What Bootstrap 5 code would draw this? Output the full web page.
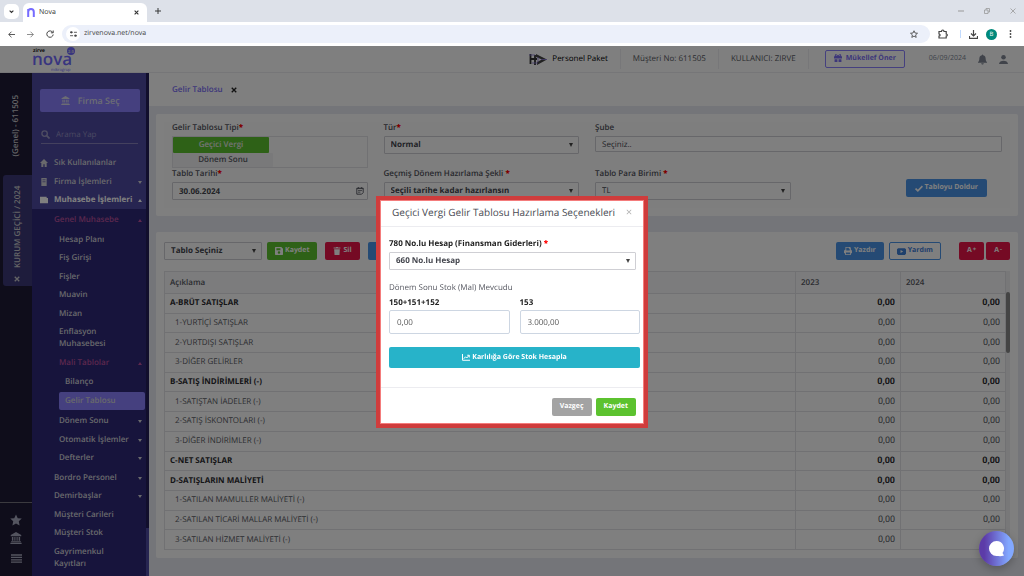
<!DOCTYPE html>
<html lang="tr">
<head>
<meta charset="utf-8">
<meta name="viewport" content="width=device-width, initial-scale=1">
<title>Nova</title>
<link href="https://cdn.jsdelivr.net/npm/bootstrap@5.3.0/dist/css/bootstrap.min.css" rel="stylesheet">
<style>
  :root { --ink:#575962; --accent:#8a80ff; --green:#5cc22f; --blue:#4a94e8; --crimson:#ea1449; }
  body { font-family:"Open Sans","Noto Sans",sans-serif; font-size:8px; line-height:12px; color:var(--ink); height:100vh; overflow:hidden; background:#e8eaf2; text-rendering:geometricPrecision; }
  svg { display:inline-block; vertical-align:middle; fill:currentColor; flex:none; }
  a { text-decoration:none; color:inherit; }
  button, input, select { font-family:inherit; text-rendering:inherit; }
  .ic { width:9px; height:9px; }

  /* browser window */
  .tabstrip { height:22px; flex:none; background:#dde1e9; color:#333; }
  .tabstrip button, .toolbar button { border:0; background:none; padding:0; color:inherit; display:flex; }
  .tabmenu { width:15px; height:15px; border-radius:5px !important; background:#fff !important; align-items:center; justify-content:center; }
  .browsertab { width:124px; height:19px; background:#fff; border-radius:6px 6px 0 0; font-size:7px; }
  .winbtns { color:#999; }
  .toolbar { height:24px; flex:none; background:#fff; color:#444; }
  .address { height:18px; background:#ecf0fa; border-radius:9px; }
  .address input { border:0; background:none; outline:0; font-size:7px; color:#444; padding:0; min-width:0; }
  .siteinfo { width:14px; height:14px; border-radius:50%; background:#fff; }
  .avatar { width:11px; height:11px; border-radius:50%; background:#00897b; color:#fff; font-size:6px; }

  /* application frame */
  .apphead { height:27px; flex:none; background:#fff; border-bottom:1px solid #ececf0; }
  .apphead .cell { height:20px; border-left:1px solid #efeff3; padding:0 12px; }
  .apphead .cell-wide { padding:0 16px; }
  .headtail { gap:12px; padding-right:16px; color:#808795; font-size:7px; }
  .logo { width:48px; height:27px; margin-left:30px; }
  .btn-suggest { border:1px solid var(--accent); border-radius:2px; color:#7a6ef5; font-weight:700; font-size:7px; line-height:12px; padding:2px 8px; background:none; height:18px; }
  .rail { width:32px; flex:none; background:#1e1a36; color:#c8c8cc; }
  .vtab { writing-mode:vertical-rl; transform:rotate(180deg); font-size:8px; line-height:12px; font-weight:600; }
  .vtab-plain { margin:22px 0 10px; }
  .vtab-active { background:#3c3878; width:29px; height:111px; border-radius:0 3px 3px 0; }
  .railfoot { border-top:1px solid #77757f; color:#a9abc0; height:74px; padding-top:11px; gap:6px; }
  .sidenav { width:117px; flex:none; background:#4e4aa2; color:#d2d2d8; font-size:8px; line-height:12px; font-weight:600; }
  .sidescroll { width:4px; background:#221c58; }
  .sidescroll i { display:block; height:48px; background:#4e4aa2; }
  .btn-firm { height:23px; margin:16px 6px 0 8px; background:var(--accent); color:#d8d8e8; border:0; border-radius:2px; font-size:9px; line-height:12px; font-weight:600; padding:0; }
  .find { margin:14px 8px 0 9px; height:18px; gap:6px; border-bottom:1px solid #8883bd; color:#9c9ac4; }
  .find input { background:none; border:0; outline:0; padding:0; min-width:0; font-size:8px; color:#ccc; }
  .find input::placeholder { color:#9692c4; opacity:1; }
  .menu { list-style:none; margin:0; padding:0; }
  .menu a { display:flex; align-items:center; padding:3px 4px 3px 22px; white-space:nowrap; }
  .menu .even > a, .deep > li:nth-child(even) > a, .deeper > li:first-child > a { padding-bottom:4px; }
  .menu .deep { padding:1px 0; }
  .menu .deep a { padding-left:27px; }
  .menu .deeper { padding:1px 0 2px; }
  .menu .deep .deeper a { padding-left:33px; }
  .roots { margin-top:10px; }
  .menu.roots a { padding-left:8px; gap:6px; }
  .menu .picked { background:var(--accent); margin:0 1px 0 27px; padding-left:6px !important; border-radius:2px; }
  .menu a[data-fold]::after { content:""; margin-left:auto; border:2px solid transparent; border-top:3px solid currentColor; border-bottom:0; }
  .menu a[data-fold="open"]::after { border-top:0; border-bottom:3px solid currentColor; }
  .submenu { background:#2e2878; flex:1; padding-top:2px; }
  .hot { color:#b8509c; }

  /* page */
  .pagetabs { height:33px; background:#fff; font-weight:600; color:#7a6ef5; padding-left:23px; }
  .panel { background:#fff; border-radius:2px; margin:0 6px 0 7px; }
  .panel-grid { margin-top:16px; padding:10px 8px 8px; }
  .formarea { background:#fcfcfd; padding:0 0 8px; }
  .formarea .row { --bs-gutter-x:16px; margin:0; }
  .lbl { display:block; font-weight:600; line-height:12px; margin-bottom:2px; color:#50525a; }
  .lbl b { color:#f00; }
  .field { display:block; width:100%; height:18px; border:1px solid #cfcfd4; border-radius:1px; background-color:#fff; padding:0 6px; font-size:8px; line-height:12px; font-weight:700; color:#44464e; }
  .field-low { height:16px; }
  .field-table { width:98px; }
  select.field { appearance:none; background-image:url("data:image/svg+xml,%3Csvg xmlns='http://www.w3.org/2000/svg' viewBox='0 0 4 4'%3E%3Cpath d='M0 0h4L2 4z' fill='%23444'/%3E%3C/svg%3E"); background-repeat:no-repeat; background-size:4px 4px; background-position:right 5px center; }
  .toggle { border:1px solid #e2e2e6; height:32px; }
  .toggle label { display:block; text-align:center; height:16px; line-height:16px; width:96px; border-radius:1px; font-weight:600; }
  .toggle .off { background:#f2f2f4; width:100px; height:14px; line-height:14px; }
  .toggle .on { background:var(--green); color:#e8e8e8; }
  .tool { display:inline-flex; align-items:center; justify-content:center; gap:2px; height:18px; padding:0 7px; border:1px solid transparent; border-radius:2px; color:#fff; font-size:7px; line-height:12px; font-weight:700; white-space:nowrap; }
  .tool-green { background:var(--green); } .tool-red { background:var(--crimson); } .tool-blue { background:var(--blue); } .tool-gray { background:#a3a3a3; }
  .tool-line { border-color:var(--blue); color:#3f80d8; background:none; }
  .tool-fill { margin:0 15px 3px 0; padding:0 8px; }
  .tool sup { font-size:6px; top:-2px; margin-left:-1px; }
  .gridtools { gap:5px; margin-bottom:11px; }
  .zoomers { gap:2px; margin-left:13px; }
  .ledger { width:100%; height:279px; border-collapse:collapse; table-layout:fixed; font-size:8px; line-height:12px; }
  .ledger .num { width:105px; }
  .ledger th, .ledger td { border:1px solid #e2e2e6; padding:0 5px; font-weight:400; }
  .ledger thead th { background:#f8f8fa; font-weight:600; height:22px; }
  .ledger tbody th { padding-left:10px; }
  .ledger td { text-align:right; font-family:Roboto,sans-serif; font-size:9px; }
  .ledger .sum th, .ledger .sum td { font-weight:700; color:#2c2c30; }
  .ledger .sum th { padding-left:5px; }
  .gridscroll { width:4px; background:#f0f0f2; padding-top:21px; }
  .gridscroll i { display:block; height:61px; background:#888; border-radius:2px; }

  /* layers above the page */
  .veil { position:absolute; inset:0; background:rgba(0,0,0,.5); z-index:5; }
  .chat { position:fixed; right:10px; bottom:10px; width:35px; height:35px; border:0; border-radius:50%; padding:0; color:#fff; z-index:20; background:linear-gradient(90deg,#5c3ba8 15%,#82a8ff 85%); box-shadow:0 3px 8px rgba(0,0,0,.25); }
  .choices .modal-dialog { max-width:272px; margin:196px auto 0; }
  .choices .modal-content { border:4px solid #cf3c3c; border-radius:0; outline:1px solid #f47c7c; outline-offset:-5px; color:var(--ink); }
  .choices .modal-header { padding:3px 12px 5px; border-bottom:1px solid #ececf0; }
  .choices .modal-title { font-size:10px; line-height:18px; font-weight:400; color:#484a52; }
  .choices .modal-body { padding:11px 4px 19px 9px; }
  .choices .btn-close { width:6px; height:6px; padding:0; margin:0; background-size:6px; box-sizing:border-box; opacity:.3; }
  .choices .lbl { color:#222; font-weight:700; }
  .choices .row { --bs-gutter-x:10px; }
  .choices .row .lbl { margin-bottom:1px; }
  .stockhint { margin:12px 0 3px; }
  .amount { display:block; width:100%; height:24px; border:1px solid #cdd6e2; border-radius:2px; padding:0 7px; font-size:8px; color:#555; }
  .btn-calc { width:100%; height:21px; margin-top:13px; background:#27b3c9; }
  .choices .modal-footer { padding:10px 8px 8px; border-top:1px solid #ececf0; gap:4px; }
  .choices .modal-footer > * { margin:0; }
</style>
</head>
<body class="d-flex flex-column">

<svg width="0" height="0" class="position-absolute" aria-hidden="true">
  <symbol id="bank" viewBox="0 0 16 16"><path d="M8 0l7 4v1.500H1V4zM2.500 6.500h2v5h-2zM5.800 6.500h1.500v5H5.800zM8.700 6.500h1.500v5H8.700zM11.500 6.500h2v5h-2zM1.500 12.300h13v1.200h-13zM.5 14.300h15V16H.5z"/></symbol>
  <symbol id="cross" viewBox="0 0 8 8"><path d="M1 1l6 6M7 1L1 7" stroke="currentColor" stroke-width="1.800"/></symbol>
  <symbol id="save" viewBox="0 0 14 14"><path fill-rule="evenodd" d="M1 0h10l3 3v10l-1 1H1l-1-1V1zM2.500 2v3.500h7V2zM7 7.500a2.200 2.200 0 100 4.400 2.200 2.200 0 000-4.400z"/></symbol>
  <symbol id="trash" viewBox="0 0 14 14"><path d="M1 1h4l.6-1h2.800L9 1h4v1.800H1zM2 3.800h10L11.300 14H2.700z"/></symbol>
  <symbol id="print" viewBox="0 0 14 14"><path fill-rule="evenodd" d="M2.500 0h8l1.500 1.500V5h.5L14 6.500V11h-2v3H2v-3H0V6.500L1.500 5h1zM4 1.500V6h6V3H8.500V1.500zM3.500 9.500v3h7v-3z"/></symbol>
  <symbol id="play" viewBox="0 0 16 12"><path fill-rule="evenodd" d="M2 0h12l2 2v8l-2 2H2l-2-2V2zM6.300 3.300v5.400L11 6z"/></symbol>
  <symbol id="chart" viewBox="0 0 16 14"><path d="M1 0v12.500h15M3.500 9.500L7 5.500l2.500 2.500L14 3M10.500 2.500H14.500V7" fill="none" stroke="currentColor" stroke-width="2"/></symbol>
  <symbol id="check" viewBox="0 0 14 12"><path d="M1 6l4 4 8-8" fill="none" stroke="currentColor" stroke-width="3"/></symbol>
  <symbol id="sync" viewBox="0 0 14 14"><path d="M2 6a5 5 0 019-2M12 8a5 5 0 01-9 2M12 1v4H8M2 13V9h4" fill="none" stroke="currentColor" stroke-width="2"/></symbol>
  <symbol id="star" viewBox="0 0 16 16"><path d="M8 .5l2.300 5 5.400.6-4 3.700 1.100 5.400L8 12.500l-4.800 2.700 1.100-5.400-4-3.700 5.400-.6z"/></symbol>
  <symbol id="gift" viewBox="0 0 14 14"><path fill-rule="evenodd" d="M0 4h2C0 1.500 3-1.500 7 2.500c4-4 7-1 5 1.500h2v4H0zM3 3.500h2.800C4.500 1.500 2.500 2 3 3.500zM8.200 3.500H11c.5-1.500-1.500-2-2.800 0zM1 9h5v5H1zM8 9h5v5H8z"/></symbol>
</svg>

<div class="tabstrip d-flex align-items-center">
  <button class="tabmenu ms-1" aria-label="Sekme ara"><svg width="5" height="5" viewBox="0 0 8 8"><path d="M1 2.500l3 3 3-3" fill="none" stroke="currentColor" stroke-width="1.800"/></svg></button>
  <div class="browsertab d-flex align-items-center align-self-end ms-1 px-1">
    <svg class="me-1" width="8" height="9" viewBox="0 0 8 9"><path d="M1.200 9V1M1.200 4C1.200 0 6.800 0 6.800 4v5" fill="none" stroke="#766bff" stroke-width="2"/></svg>
    <span>Nova</span>
    <button class="ms-auto me-1" aria-label="Sekmeyi kapat"><svg width="5" height="5"><use href="#cross"/></svg></button>
  </div>
  <button class="ms-2" aria-label="Yeni sekme"><svg width="6" height="6" viewBox="0 0 8 8"><path d="M4 0v8M0 4h8" stroke="currentColor" stroke-width="1.300"/></svg></button>
  <div class="winbtns ms-auto d-flex align-items-center gap-3 me-2">
    <button class="me-1" aria-label="Küçült"><svg width="6" height="6" viewBox="0 0 6 6"><path d="M0 3h6" stroke="currentColor"/></svg></button>
    <button class="me-1" aria-label="Geri yükle"><svg width="6" height="6" viewBox="0 0 6 6"><path d="M.5 2h3.500v3.500H.5zM2 2V.5h3.500V4H4" fill="none" stroke="currentColor" stroke-width=".8"/></svg></button>
    <button aria-label="Kapat"><svg width="6" height="6" viewBox="0 0 6 6"><path d="M.5.5l5 5M5.500.5l-5 5" stroke="currentColor" stroke-width=".8"/></svg></button>
  </div>
</div>
<div class="toolbar d-flex align-items-center px-2">
  <button aria-label="Geri"><svg width="7" height="7" viewBox="0 0 8 8"><path d="M8 4H1M4 .8L.8 4 4 7.200" fill="none" stroke="currentColor"/></svg></button>
  <button class="ms-2 ps-1 text-black-50" aria-label="İleri"><svg width="7" height="7" viewBox="0 0 8 8"><path d="M0 4h7M4 .8L7.200 4 4 7.200" fill="none" stroke="currentColor"/></svg></button>
  <button class="ms-2 ps-1" aria-label="Yenile"><svg width="8" height="8" viewBox="0 0 8 8"><path d="M6.800 2.500A3.200 3.200 0 107.200 4.500M7.200.5v2.300H4.900" fill="none" stroke="currentColor"/></svg></button>
  <div class="address flex-grow-1 d-flex align-items-center ms-2 pe-2">
    <span class="siteinfo d-flex align-items-center justify-content-center ms-1"><svg width="7" height="6" viewBox="0 0 8 7"><path d="M0 1.500h3M5 5.500h3M4.500 1.500H8M0 5.500h3.500" stroke="currentColor"/><circle cx="1.500" cy="1.500" r="1.300"/><circle cx="6.300" cy="5.500" r="1.300"/></svg></span>
    <input class="flex-grow-1 ms-1" type="text" value="zirvenova.net/nova" aria-label="Adres">
    <svg class="me-1" width="8" height="8" viewBox="0 0 16 16"><path d="M8 1.500l2 4.500 5 .5-3.800 3.300 1.200 5L8 12.200l-4.400 2.600 1.200-5L1 6.500 6 6z" fill="none" stroke="currentColor" stroke-width="1.700"/></svg>
  </div>
  <button class="ms-2 me-2" aria-label="Uzantılar"><svg width="10" height="10" viewBox="0 0 10 10"><path d="M1 2.500h2.500C3.500.5 6 .5 6 2.500h2.200V5c1.500 0 1.500 2 0 2v2H1V7c1.500 0 1.500-2 0-2z" fill="none" stroke="currentColor" stroke-width="1.200"/></svg></button>
  <span class="vr mx-1 my-2 text-primary"></span>
  <button class="ms-1" aria-label="İndirilenler"><svg width="9" height="9" viewBox="0 0 9 9"><path d="M4.500 0v6M2 3.500L4.500 6 7 3.500M.5 6v2.400h8V6" fill="none" stroke="currentColor" stroke-width="1.200"/></svg></button>
  <span class="avatar d-flex align-items-center justify-content-center mx-2">B</span>
  <button class="mx-1" aria-label="Menü"><svg width="3" height="8" viewBox="0 0 3 8"><circle cx="1.500" cy="1" r=".9"/><circle cx="1.500" cy="4" r=".9"/><circle cx="1.500" cy="7" r=".9"/></svg></button>
</div>

<div class="position-relative flex-grow-1 d-flex flex-column">
  <header class="apphead d-flex align-items-center">
    <svg class="logo" viewBox="0 0 48 27" font-family="Open Sans" font-weight="700"><text x="3" y="6" font-size="5" fill="#111">zirve</text><text x="2" y="19" font-size="17" font-weight="600" fill="#716aff">nova</text><circle cx="41" cy="5" r="4" fill="#716aff"/><text x="38" y="7" font-size="4" fill="#ddd">2.0</text><text x="21" y="25" font-size="4" font-weight="400" fill="#716aff">mikrogrup</text></svg>
    <span class="ms-auto me-2 pe-1 d-flex align-items-center gap-1 text-black"><svg width="19" height="13" viewBox="0 0 19 13"><path d="M1.500 1v10M6 2v10M1 6h7" stroke="#333" stroke-width="1.800"/><path d="M7 1l11 5.500L8 12V9l5-2.500L7 4z" fill="#444"/><path d="M0 2h6M3 10h6M9 4v5M12 6.500h6" stroke="#8a7ad8" stroke-width=".8"/></svg>Personel Paket</span>
    <span class="cell d-flex align-items-center">Müşteri No: 611505</span>
    <span class="cell d-flex align-items-center">KULLANICI: ZIRVE</span>
    <span class="cell cell-wide d-flex align-items-center"><button class="btn-suggest"><svg class="me-1" width="8" height="8"><use href="#gift"/></svg>Mükellef Öner</button></span>
    <span class="headtail ms-2 d-flex align-items-center"><span>06/09/2024</span>
    <svg width="9" height="11" viewBox="0 0 14 16"><path d="M7 0l1 1.500C11 2 12 4.500 12 7.500c0 2.500 1 3.500 2 4.500v1H0v-1c1-1 2-2 2-4.500 0-3 1-5.500 4-6zM5 14h4c0 2.500-4 2.500-4 0z"/></svg>
    <svg width="9" height="9" viewBox="0 0 14 14"><circle cx="7" cy="3.500" r="3.500"/><path d="M0 14c0-7 14-7 14 0z"/></svg></span>
  </header>

  <div class="d-flex flex-grow-1">
    <aside class="rail d-flex flex-column">
      <a href="#" class="vtab vtab-plain align-self-center">(Genel) - 611505</a>
      <a href="#" class="vtab vtab-active align-self-end d-flex align-items-center gap-2 px-0 py-1 mt-2"><svg width="6" height="6"><use href="#cross"/></svg>KURUM GEÇİCİ / 2024</a>
      <div class="railfoot mt-auto d-flex flex-column align-items-center">
        <svg width="12" height="12"><use href="#star"/></svg>
        <svg width="12" height="12"><use href="#bank"/></svg>
        <svg class="mt-1" width="11" height="9" viewBox="0 0 11 9"><path d="M0 1h11M0 3.400h11M0 5.800h11M0 8.200h11" stroke="currentColor" stroke-width="1.300"/></svg>
      </div>
    </aside>

    <nav class="sidenav d-flex">
      <div class="flex-grow-1 d-flex flex-column">
        <button class="btn-firm d-flex align-items-center justify-content-center gap-2"><svg class="ic"><use href="#bank"/></svg>Firma Seç</button>
        <label class="find d-flex align-items-center"><svg class="ic" viewBox="0 0 10 10"><circle cx="4" cy="4" r="3" fill="none" stroke="currentColor" stroke-width="1.500"/><path d="M6 6l3.500 3.500" stroke="currentColor" stroke-width="1.800"/></svg><input type="search" class="w-100" placeholder="Arama Yap" aria-label="Arama Yap"></label>
        <ul class="menu roots">
          <li class="even"><a href="#"><svg width="8" height="8" viewBox="0 0 12 12" fill="#7871c8"><path d="M6 0l6 6h-2v6H7V8H5v4H2V6H0z"/></svg>Sık Kullanılanlar</a></li>
          <li><a href="#" data-fold="closed"><svg width="8" height="8" viewBox="0 0 12 12" fill="#7871c8"><path fill-rule="evenodd" d="M2 0h8v12H2zM4 2v1.500h1.500V2zM6.500 2v1.500H8V2zM4 5v1.500h1.500V5zM6.500 5v1.500H8V5z"/></svg>Firma İşlemleri</a></li>
          <li><a href="#" data-fold="open" class="text-white fw-bold"><svg width="8" height="8" viewBox="0 0 12 12"><path d="M0 1h10v2h2v8H0z"/></svg>Muhasebe İşlemleri</a></li>
        </ul>
        <div class="submenu">
          <ul class="menu">
            <li class="even"><a href="#" data-fold="open" class="hot">Genel Muhasebe</a>
              <ul class="menu deep">
                <li><a href="#">Hesap Planı</a></li><li><a href="#">Fiş Girişi</a></li><li><a href="#">Fişler</a></li><li><a href="#">Muavin</a></li><li><a href="#">Mizan</a></li>
                <li><a href="#">Enflasyon<br>Muhasebesi</a></li>
                <li><a href="#" data-fold="open" class="hot">Mali Tablolar</a>
                  <ul class="menu deeper"><li><a href="#">Bilanço</a></li><li><a href="#" class="picked">Gelir Tablosu</a></li></ul></li>
                <li><a href="#" data-fold="closed">Dönem Sonu</a></li><li><a href="#" data-fold="closed">Otomatik İşlemler</a></li><li><a href="#" data-fold="closed">Defterler</a></li>
              </ul></li>
            <li><a href="#" data-fold="closed">Bordro Personel</a></li>
            <li class="even"><a href="#" data-fold="closed">Demirbaşlar</a></li>
            <li><a href="#">Müşteri Carileri</a></li>
            <li class="even"><a href="#">Müşteri Stok</a></li>
            <li><a href="#">Gayrimenkul<br>Kayıtları</a></li>
          </ul>
        </div>
      </div>
      <div class="sidescroll d-flex flex-column justify-content-end"><i></i></div>
    </nav>

    <main class="flex-grow-1">
      <div class="pagetabs d-flex align-items-center gap-2"><a href="#">Gelir Tablosu</a><svg width="6" height="6" color="#222"><use href="#cross"/></svg></div>

      <section class="panel mt-2 p-2">
        <div class="formarea">
          <div class="row">
            <div class="col-3">
              <span class="lbl">Gelir Tablosu Tipi<b>*</b></span>
              <div class="toggle">
                <label class="on"><input type="radio" class="visually-hidden" name="tip" checked>Geçici Vergi</label>
                <label class="off"><input type="radio" class="visually-hidden" name="tip">Dönem Sonu</label>
              </div>
              <label class="lbl" for="tarih">Tablo Tarihi<b>*</b></label>
              <div class="position-relative"><input id="tarih" class="field" value="30.06.2024">
                <svg class="position-absolute top-50 end-0 translate-middle-y me-1" width="8" height="8" viewBox="0 0 10 10"><path d="M1 1.500h8v5.500L7 9H1z" fill="none" stroke="currentColor" stroke-width="1.200"/><path d="M1 2h8M2.500 4.500h5M2.500 6.500h3M3 0v2M7 0v2" stroke="currentColor"/></svg></div>
            </div>
            <div class="col-3 d-flex flex-column justify-content-between">
              <div><label class="lbl" for="tur">Tür<b>*</b></label><select id="tur" class="field"><option>Normal</option></select></div>
              <div><label class="lbl" for="sekil">Geçmiş Dönem Hazırlama Şekli <b>*</b></label><select id="sekil" class="field"><option>Seçili tarihe kadar hazırlansın</option></select></div>
            </div>
            <div class="col-6 d-flex flex-column justify-content-between">
              <div><label class="lbl" for="sube">Şube</label><input id="sube" class="field field-low fw-normal" value="Seçiniz.."></div>
              <div class="d-flex align-items-end justify-content-between">
                <div class="w-50 pe-2"><label class="lbl" for="para">Tablo Para Birimi <b>*</b></label><select id="para" class="field fw-normal"><option>TL</option></select></div>
                <button class="tool tool-blue tool-fill"><svg width="8" height="7"><use href="#check"/></svg>Tabloyu Doldur</button>
              </div>
            </div>
          </div>
        </div>
      </section>

      <section class="panel panel-grid">
        <div class="gridtools d-flex align-items-center">
          <select class="field field-table" aria-label="Tablo"><option>Tablo Seçiniz</option></select>
          <div class="d-flex gap-2">
            <button class="tool tool-green"><svg width="8" height="8"><use href="#save"/></svg>Kaydet</button>
            <button class="tool tool-red"><svg width="8" height="8"><use href="#trash"/></svg>Sil</button>
            <button class="tool tool-blue" aria-label="Yenile"><svg width="8" height="8"><use href="#sync"/></svg></button>
          </div>
          <button class="tool tool-blue ms-auto"><svg width="8" height="8"><use href="#print"/></svg>Yazdır</button>
          <button class="tool tool-line"><svg width="9" height="7"><use href="#play"/></svg>Yardım</button>
          <div class="zoomers d-flex"><button class="tool tool-red">A<sup>+</sup></button><button class="tool tool-red">A<sup>-</sup></button></div>
        </div>
        <div class="d-flex">
          <table class="ledger">
            <colgroup><col><col class="num"><col class="num"></colgroup>
            <thead><tr><th>Açıklama</th><th>2023</th><th>2024</th></tr></thead>
            <tbody>
              <tr class="sum"><th>A-BRÜT SATIŞLAR</th><td>0,00</td><td>0,00</td></tr>
              <tr><th>1-YURTİÇİ SATIŞLAR</th><td>0,00</td><td>0,00</td></tr>
              <tr><th>2-YURTDIŞI SATIŞLAR</th><td>0,00</td><td>0,00</td></tr>
              <tr><th>3-DİĞER GELİRLER</th><td>0,00</td><td>0,00</td></tr>
              <tr class="sum"><th>B-SATIŞ İNDİRİMLERİ (-)</th><td>0,00</td><td>0,00</td></tr>
              <tr><th>1-SATIŞTAN İADELER (-)</th><td>0,00</td><td>0,00</td></tr>
              <tr><th>2-SATIŞ İSKONTOLARI (-)</th><td>0,00</td><td>0,00</td></tr>
              <tr><th>3-DİĞER İNDİRİMLER (-)</th><td>0,00</td><td>0,00</td></tr>
              <tr class="sum"><th>C-NET SATIŞLAR</th><td>0,00</td><td>0,00</td></tr>
              <tr class="sum"><th>D-SATIŞLARIN MALİYETİ</th><td>0,00</td><td>0,00</td></tr>
              <tr><th>1-SATILAN MAMULLER MALİYETİ (-)</th><td>0,00</td><td>0,00</td></tr>
              <tr><th>2-SATILAN TİCARİ MALLAR MALİYETİ (-)</th><td>0,00</td><td>0,00</td></tr>
              <tr><th>3-SATILAN HİZMET MALİYETİ (-)</th><td>0,00</td><td></td></tr>
            </tbody>
          </table>
          <div class="gridscroll"><i></i></div>
        </div>
      </section>
    </main>
  </div>
  <div class="veil"></div>
</div>

<div class="modal choices d-block" role="dialog" aria-labelledby="baslik">
  <div class="modal-dialog">
    <div class="modal-content">
      <div class="modal-header align-items-center"><h5 class="modal-title" id="baslik">Geçici Vergi Gelir Tablosu Hazırlama Seçenekleri</h5><button class="btn-close" aria-label="Kapat"></button></div>
      <div class="modal-body">
        <div class="me-1"><label class="lbl" for="hesap">780 No.lu Hesap (Finansman Giderleri) <b>*</b></label><select id="hesap" class="field"><option>660 No.lu Hesap</option></select></div>
        <p class="stockhint">Dönem Sonu Stok (Mal) Mevcudu</p>
        <div class="row">
          <div class="col"><label class="lbl" for="s150">150+151+152</label><input id="s150" class="amount" value="0,00"></div>
          <div class="col"><label class="lbl" for="s153">153</label><input id="s153" class="amount" value="3.000,00"></div>
        </div>
        <button class="tool btn-calc"><svg width="8" height="7"><use href="#chart"/></svg>Karlılığa Göre Stok Hesapla</button>
      </div>
      <div class="modal-footer"><button class="tool tool-gray">Vazgeç</button><button class="tool tool-green">Kaydet</button></div>
    </div>
  </div>
</div>

<button class="chat" aria-label="Sohbet"><svg width="17" height="17" viewBox="0 0 17 17"><path d="M8.500 1a7.500 7.500 0 016 12l1.500 2.500c-3 1-5 .5-7.500.5a7.500 7.500 0 010-15z"/></svg></button>

<script src="https://cdn.jsdelivr.net/npm/bootstrap@5.3.0/dist/js/bootstrap.bundle.min.js"></script>
</body>
</html>
